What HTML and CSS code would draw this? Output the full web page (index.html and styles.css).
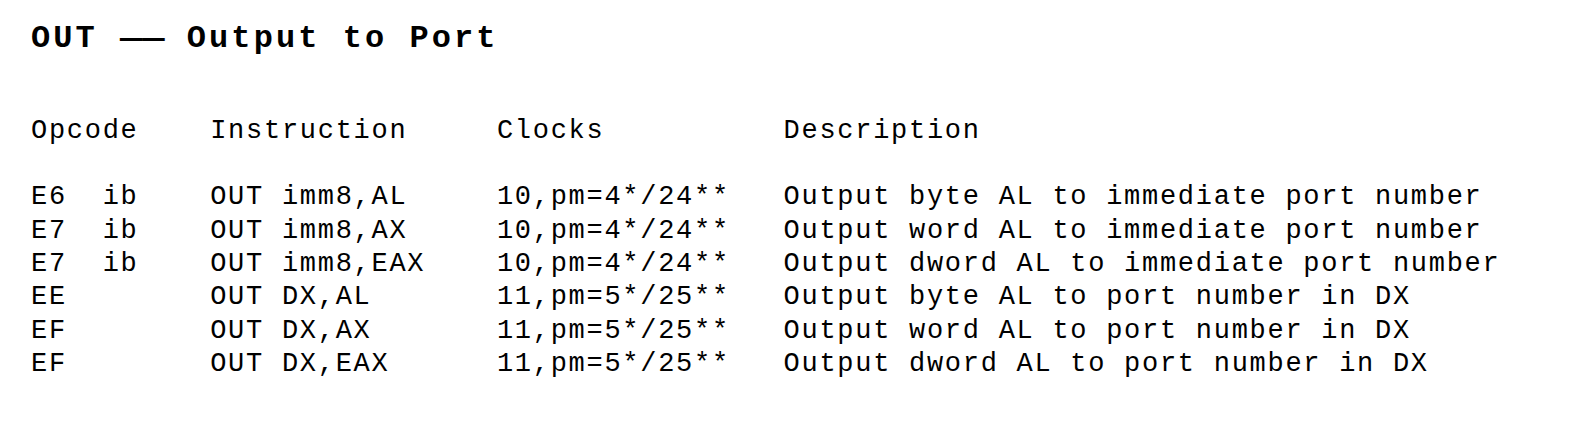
FILE: index.html
```html
<!DOCTYPE html>
<html lang="en">

<head>
    <meta charset="UTF-8">
    <meta name="viewport" content="width=device-width, initial-scale=1.0">
    <title>OUT - Output to Port</title>
    <link rel="stylesheet" href="styles.css">
</head>

<body>

    <div class="page">
        <h1 class="title">OUT <span class="dash">——</span> Output to Port</h1>

        <div class="opTable">
            <div class="cell">Opcode</div>
            <div class="cell">Instruction</div>
            <div class="cell">Clocks</div>
            <div class="cell">Description</div>

            <div class="blank"></div>

            <div class="cell">E6  ib</div>
            <div class="cell">OUT imm8,AL</div>
            <div class="cell">10,pm=4*/24**</div>
            <div class="cell">Output byte AL to immediate port number</div>

            <div class="cell">E7  ib</div>
            <div class="cell">OUT imm8,AX</div>
            <div class="cell">10,pm=4*/24**</div>
            <div class="cell">Output word AL to immediate port number</div>

            <div class="cell">E7  ib</div>
            <div class="cell">OUT imm8,EAX</div>
            <div class="cell">10,pm=4*/24**</div>
            <div class="cell">Output dword AL to immediate port number</div>

            <div class="cell">EE</div>
            <div class="cell">OUT DX,AL</div>
            <div class="cell">11,pm=5*/25**</div>
            <div class="cell">Output byte AL to port number in DX</div>

            <div class="cell">EF</div>
            <div class="cell">OUT DX,AX</div>
            <div class="cell">11,pm=5*/25**</div>
            <div class="cell">Output word AL to port number in DX</div>

            <div class="cell">EF</div>
            <div class="cell">OUT DX,EAX</div>
            <div class="cell">11,pm=5*/25**</div>
            <div class="cell">Output dword AL to port number in DX</div>
        </div>
    </div>

</body>

</html>
```

FILE: styles.css
```css
body {
    margin: 0;
    background-color: #ffffff;
    color: #000000;
    font-family: 'Liberation Mono', 'Courier New', monospace;
}

.page {
    padding: 17px 0 0 31px;
}

/* smaller glyphs + letter-spacing keep the typewriter pitch (22.26px) */
.title {
    margin: 0;
    font-size: 32px;
    letter-spacing: 3.06px;
    line-height: 44px;
    font-weight: bold;
}

/* the two dashes join up into one long rule, two cells wide */
.dash {
    display: inline-block;
    width: 44.52px;
    letter-spacing: 0;
    transform: scaleX(1.16);
    transform-origin: left center;
}

/* four fixed columns, one character = 17.92px */
.opTable {
    display: grid;
    grid-template-columns: 179.2px 286.7px 286.7px auto;
    margin-top: 53.75px;
    font-size: 27px;
    letter-spacing: 1.72px;
    line-height: 33.3px;
}

.cell {
    white-space: pre;
}

.blank {
    grid-column: 1 / -1;
    height: 33.3px;
}
```
